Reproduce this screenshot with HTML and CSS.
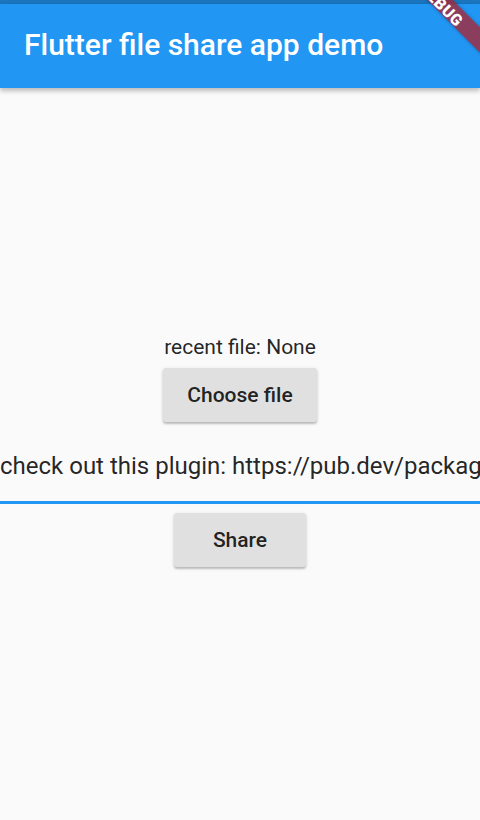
FILE: index.html
```html
<!DOCTYPE html>
<html>
<head>
<meta charset="utf-8">
<link rel="stylesheet" href="styles.css">
</head>
<body>
<div class="screen">
  <div class="statusbar"></div>
  <header class="appbar">
    <h1 class="title">Flutter file share app demo</h1>
  </header>
  <main class="content">
    <div class="recent">recent file: None</div>
    <button class="btn btn-choose">Choose file</button>
    <div class="field">
      <div class="field-text">check out this plugin: https://pub.dev/packages/share</div>
    </div>
    <button class="btn btn-share">Share</button>
  </main>
  <div class="banner"><span>DEBUG</span></div>
</div>
</body>
</html>
```
FILE: styles.css
```css
* { box-sizing: border-box; }
html, body { margin: 0; padding: 0; }
body {
  background: #FAFAFA;
  font-family: Roboto, "Noto Sans", sans-serif;
  color: rgba(0,0,0,0.87);
}
.screen {
  position: relative;
  width: 480px;
  height: 820px;
  overflow: hidden;
}
.statusbar {
  height: 4px;
  background: #1A78C2;
}
.appbar {
  position: relative;
  z-index: 2;
  height: 84px;
  background: #2196F3;
  display: flex;
  align-items: center;
  padding-left: 24px;
  box-shadow: 0 3px 4px rgba(0,0,0,0.18), 0 1px 8px rgba(0,0,0,0.12);
}
.title {
  margin: 0;
  color: #fff;
  font-size: 30px;
  font-weight: 500;
  letter-spacing: 0;
  line-height: 1;
  margin-top: -2px;
}
.content {
  height: 732px;
  display: flex;
  flex-direction: column;
  align-items: center;
  justify-content: center;
}
.recent {
  font-size: 21px;
  line-height: 26px;
  height: 26px;
  padding-top: 1px;
}
.btn {
  margin: 9px 0;
  height: 54px;
  min-width: 132px;
  padding: 0 24px;
  border: none;
  border-radius: 3px;
  background: #E0E0E0;
  font-family: Roboto, "Noto Sans", sans-serif;
  font-weight: 500;
  font-size: 21px;
  color: rgba(0,0,0,0.87);
  box-shadow: 0 2px 2px rgba(0,0,0,0.2), 0 1px 4px rgba(0,0,0,0.1);
}
.field {
  width: 100%;
  height: 73px;
  padding-top: 20px;
  border-bottom: 3px solid #2196F3;
  overflow: hidden;
}
.field-text {
  white-space: nowrap;
  font-size: 24px;
  line-height: 30px;
  color: rgba(0,0,0,0.87);
}
.banner {
  position: absolute;
  z-index: 5;
  left: 342.5px;
  top: -6.5px;
  width: 200px;
  height: 18px;
  background: rgba(176,30,40,0.74);
  transform: rotate(45deg);
  display: flex;
  align-items: center;
  justify-content: center;
  box-shadow: 0 0 4px rgba(0,0,0,0.25);
}
.banner span {
  color: #fff;
  font-weight: 900;
  font-size: 16px;
  letter-spacing: 0.5px;
  line-height: 1;
  transform: translateY(3px);
}
```
